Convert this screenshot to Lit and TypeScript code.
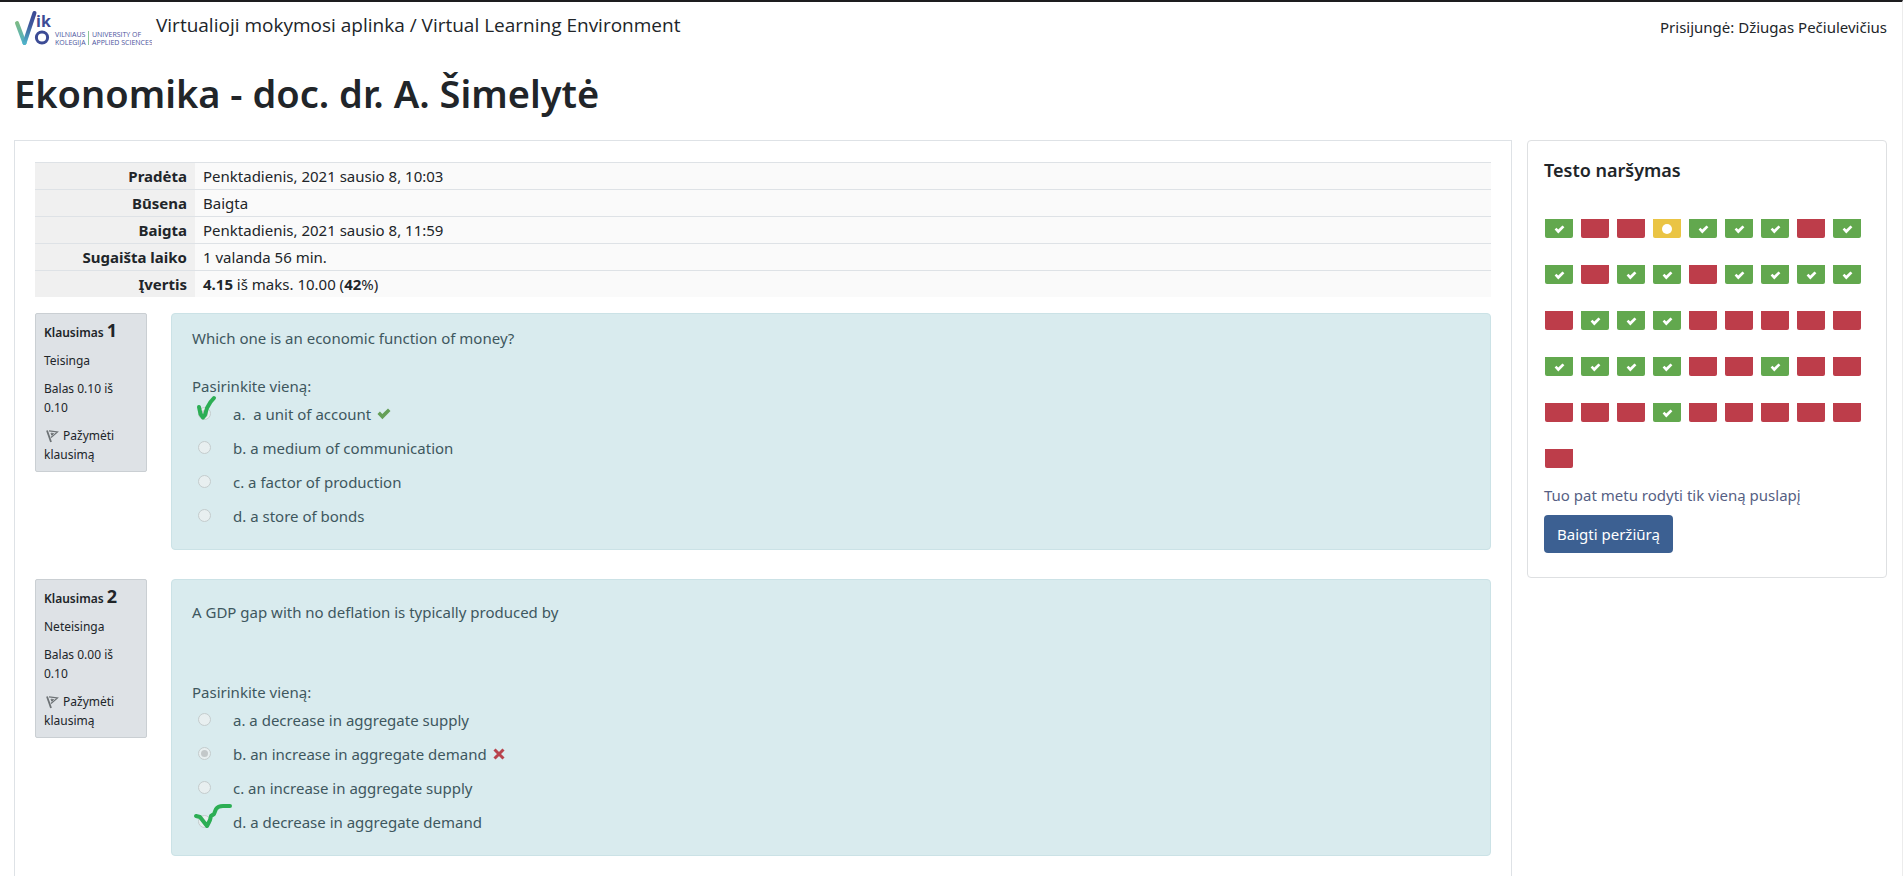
import { LitElement, html, css, svg, nothing } from "lit";
import { customElement, property } from "lit/decorators.js";

type Mark = "right" | "wrong";
type Stroke = "short" | "long";

interface Option {
  text: string;
  checked?: boolean;
  mark?: Mark;
  pen?: Stroke;
}

interface Question {
  number: number;
  state: string;
  grade: string;
  text: string;
  spacious?: boolean;
  options: Option[];
}

const QUESTIONS: Question[] = [
  {
    number: 1,
    state: "Teisinga",
    grade: "Balas 0.10 iš 0.10",
    text: "Which one is an economic function of money?",
    options: [
      { text: "a.\u00a0 a unit of account", checked: true, mark: "right", pen: "short" },
      { text: "b. a medium of communication" },
      { text: "c. a factor of production" },
      { text: "d. a store of bonds" },
    ],
  },
  {
    number: 2,
    state: "Neteisinga",
    grade: "Balas 0.00 iš 0.10",
    text: "A GDP gap with no deflation is typically produced by",
    spacious: true,
    options: [
      { text: "a. a decrease in aggregate supply" },
      { text: "b. an increase in aggregate demand", checked: true, mark: "wrong" },
      { text: "c. an increase in aggregate supply" },
      { text: "d. a decrease in aggregate demand", pen: "long" },
    ],
  },
];

/* c = correct, w = wrong, p = partially correct */
const RESULTS = "cwwpcccwc" + "cwccwcccc" + "wcccwwwww" + "ccccwwcww" + "wwwcwwwww" + "w";
const RESULT_NAMES: Record<string, string> = {
  c: "Teisinga",
  w: "Neteisinga",
  p: "Iš dalies teisinga",
};

const tick = svg`<path d="M0.500 6 L2.900 3.600 L5.300 5.900 L11 0.500 L13.500 2.900 L5.400 11.200 Z" />`;

@customElement("vle-logo")
export class VleLogo extends LitElement {
  static styles = css`
    :host {
      display: block;
    }
    svg {
      display: block;
    }
    .letters {
      font: 700 16px "Open Sans", "Noto Sans", sans-serif;
      fill: #3c4b95;
    }
    .name {
      font: 400 7px "Open Sans", "Noto Sans", sans-serif;
      fill: #4a549c;
    }
  `;

  render() {
    return html`
      <svg width="138" height="38" viewBox="0 0 138 38" role="img" aria-label="Vilniaus kolegija">
        <defs>
          <linearGradient id="left" x1="0" y1="0" x2="0" y2="1">
            <stop offset="0" stop-color="#7cba86" />
            <stop offset="1" stop-color="#4fb2c8" />
          </linearGradient>
          <linearGradient id="right" x1="0" y1="1" x2="0" y2="0">
            <stop offset="0" stop-color="#4fb2c8" />
            <stop offset="0.6" stop-color="#3f579c" />
            <stop offset="1" stop-color="#3c4b95" />
          </linearGradient>
        </defs>
        <path d="M3 14 L10.5 34" stroke="url(#left)" stroke-width="4" stroke-linecap="round" />
        <path d="M10.5 34 L20.5 4" stroke="url(#right)" stroke-width="4" stroke-linecap="round" />
        <text class="letters" x="22" y="18">ik</text>
        <circle cx="28" cy="28.5" r="5.6" fill="none" stroke="#3c4b95" stroke-width="3" />
        <text class="name" x="41" y="28">VILNIAUS</text>
        <text class="name" x="41" y="36">KOLEGIJA</text>
        <path d="M74.5 22 V36" stroke="#8cc59a" />
        <text class="name" x="78" y="28">UNIVERSITY OF</text>
        <text class="name" x="78" y="36">APPLIED SCIENCES</text>
      </svg>
    `;
  }
}

@customElement("attempt-summary")
export class AttemptSummary extends LitElement {
  static styles = css`
    :host {
      display: block;
    }
    table {
      width: 100%;
      border-collapse: collapse;
    }
    th,
    td {
      height: 26px;
      padding: 0 8px;
      border-top: 1px solid #dee2e6;
      line-height: 22px;
    }
    th {
      width: 144px;
      background: #f0f0f0;
      font-weight: 700;
      text-align: right;
    }
    td {
      background: #fafafa;
    }
  `;

  render() {
    return html`
      <table>
        <tbody>
          <tr><th scope="row">Pradėta</th><td>Penktadienis, 2021 sausio 8, 10:03</td></tr>
          <tr><th scope="row">Būsena</th><td>Baigta</td></tr>
          <tr><th scope="row">Baigta</th><td>Penktadienis, 2021 sausio 8, 11:59</td></tr>
          <tr><th scope="row">Sugaišta laiko</th><td>1 valanda 56 min.</td></tr>
          <tr><th scope="row">Įvertis</th><td><b>4.15</b> iš maks. 10.00 (<b>42</b>%)</td></tr>
        </tbody>
      </table>
    `;
  }
}

@customElement("quiz-question")
export class QuizQuestion extends LitElement {
  @property({ attribute: false }) question!: Question;

  static styles = css`
    :host {
      display: grid;
      grid-template-columns: 112px minmax(0, 1fr);
      gap: 24px;
      align-items: start;
    }
    .info {
      display: flex;
      flex-direction: column;
      gap: 9px;
      box-sizing: border-box;
      padding: 10px 8px 7px;
      border: 1px solid #cacfd3;
      border-radius: 2px;
      background: #dee2e6;
      font-size: 12px;
      line-height: 19px;
    }
    .info h3,
    .info p {
      margin: 0;
    }
    .info h3 {
      font-size: 12px;
      font-weight: 600;
      line-height: 18px;
    }
    .number {
      font-size: 18px;
      font-weight: 700;
      line-height: 12px;
    }
    .grade {
      max-width: 80px;
    }
    .flag {
      color: inherit;
      text-decoration: none;
    }
    .flag svg {
      margin: 0 3px 0 2px;
      vertical-align: -3px;
    }
    .content {
      padding: 13px 20px 16px;
      border: 1px solid #cbe2e6;
      border-radius: 4px;
      background: #d9ebee;
      color: #3e575e;
    }
    .text {
      margin: 0 0 26px;
      line-height: 22px;
    }
    .spacious .text {
      margin: 8px 0 58px;
    }
    fieldset {
      min-width: 0;
      margin: 0;
      padding: 0;
      border: 0;
    }
    legend {
      padding: 0;
      line-height: 22px;
    }
    .option {
      display: flex;
      align-items: center;
      height: 34px;
      line-height: 22px;
    }
    .choice {
      position: relative;
      display: flex;
      width: 41px;
    }
    input {
      appearance: none;
      display: grid;
      place-items: center;
      box-sizing: border-box;
      width: 13px;
      height: 13px;
      margin: 0 0 2px 6px;
      border: 1px solid #c4cccd;
      border-radius: 50%;
      background: #e8eff0;
    }
    input:checked::before {
      content: "";
      width: 7px;
      height: 7px;
      border-radius: 50%;
      background: #c3c8c9;
    }
    .pen {
      position: absolute;
      left: 0;
      bottom: 0;
      fill: none;
      stroke: #2cae54;
      stroke-width: 4;
      stroke-linecap: round;
      stroke-linejoin: round;
      pointer-events: none;
    }
    .right,
    .wrong {
      margin-left: 6px;
    }
    .right {
      fill: #659f57;
    }
    .wrong {
      fill: none;
      stroke: #b8434c;
      stroke-width: 3;
    }
  `;

  private pen(kind?: Stroke) {
    if (!kind) return nothing;
    return kind === "short"
      ? html`<svg class="pen" width="40" height="28" viewBox="0 0 40 28" aria-hidden="true">
          <path d="M7 13 L8.500 20 L11 23.500 L13 21 L15 14 L18.500 8 L22 4" />
        </svg>`
      : html`<svg class="pen" width="42" height="28" viewBox="0 0 42 28" aria-hidden="true">
          <path d="M4 14 L8 15 L15 24 L18 18 L19 14 L22 12 L24 7 Q26 4 31 4 H38" />
        </svg>`;
  }

  private mark(kind?: Mark) {
    if (!kind) return nothing;
    return kind === "right"
      ? html`<svg class="right" width="14" height="12" viewBox="0 0 14 12" role="img" aria-label="Teisinga">${tick}</svg>`
      : html`<svg class="wrong" width="12" height="12" viewBox="0 0 12 12" role="img" aria-label="Neteisinga">
          <path d="M1.500 1.500 L10.500 10.500 M10.500 1.500 L1.500 10.500" />
        </svg>`;
  }

  render() {
    const q = this.question;
    return html`
      <div class="info">
        <h3>Klausimas <span class="number">${q.number}</span></h3>
        <p>${q.state}</p>
        <p class="grade">${q.grade}</p>
        <p>
          <a class="flag" href="#flag-${q.number}"><svg width="14" height="14" viewBox="0 0 14 14" fill="none" stroke="#6d7275" aria-hidden="true">
              <path stroke-width="1.800" d="M1 1.500 L5 13" />
              <path stroke-width="1.200" d="M3 1.800 L11.500 3 L5 8.500" />
              <path d="M5 4.200 L7.500 4.500 L5.800 6.200 Z" />
            </svg>Pažymėti klausimą</a>
        </p>
      </div>
      <div class="content ${q.spacious ? "spacious" : ""}">
        <p class="text">${q.text}</p>
        <fieldset>
          <legend>Pasirinkite vieną:</legend>
          <div class="options">
            ${q.options.map(
              (o, i) => html`
                <div class="option">
                  <span class="choice">
                    <input type="radio" id="o${i}" name="q${q.number}" ?checked=${o.checked} disabled />
                    ${this.pen(o.pen)}
                  </span>
                  <label for="o${i}">${o.text}</label>
                  ${this.mark(o.mark)}
                </div>
              `
            )}
          </div>
        </fieldset>
      </div>
    `;
  }
}

@customElement("quiz-navigation")
export class QuizNavigation extends LitElement {
  static styles = css`
    :host {
      display: block;
      padding: 15px 16px 24px;
      border: 1px solid #dee0e2;
      border-radius: 4px;
    }
    h2 {
      margin: 0 0 35px;
      font-size: 18px;
      font-weight: 600;
      line-height: 28px;
    }
    .cells {
      display: flex;
      flex-wrap: wrap;
      gap: 27px 8px;
      margin-bottom: 15px;
      padding-left: 1px;
    }
    .cell {
      display: grid;
      place-items: center;
      width: 28px;
      height: 19px;
      border-radius: 0 0 2px 2px;
      background: #bd3d4a;
    }
    .c {
      background: #62a84e;
    }
    .p {
      background: #eac444;
    }
    .cell svg {
      margin-top: 1px;
      fill: #fff;
    }
    .all {
      display: block;
      margin-bottom: 8px;
      color: #565f84;
      line-height: 24px;
      text-decoration: none;
    }
    button {
      height: 38px;
      padding: 0 13px;
      border: 0;
      border-radius: 4px;
      background: #3c6092;
      color: #fff;
      font: inherit;
    }
    .end {
      display: flex;
    }
  `;

  private glyph(kind: string) {
    if (kind === "c") return html`<svg width="11" height="9" viewBox="0 0 14 12" aria-hidden="true">${tick}</svg>`;
    if (kind === "p")
      return html`<svg width="10" height="10" viewBox="0 0 10 10" aria-hidden="true"><circle cx="5" cy="5" r="5" /></svg>`;
    return nothing;
  }

  render() {
    return html`
      <h2>Testo naršymas</h2>
      <nav class="cells" aria-label="Testo naršymas">
        ${[...RESULTS].map(
          (kind, i) => html`<a class="cell ${kind}" href="#q${i + 1}" aria-label="${i + 1}: ${RESULT_NAMES[kind]}">${this.glyph(kind)}</a>`
        )}
      </nav>
      <a class="all" href="#single">Tuo pat metu rodyti tik vieną puslapį</a>
      <div class="end"><button type="button">Baigti peržiūrą</button></div>
    `;
  }
}

@customElement("app-root")
export class AppRoot extends LitElement {
  static styles = css`
    :host {
      display: flex;
      flex-direction: column;
      box-sizing: border-box;
      min-height: 100vh;
      padding: 0 15px 0 14px;
      border-top: 2px solid #1d1d1f;
      border-right: 1px solid #ececec;
      background: #fff;
      color: #212529;
      font: 15px/22px "Noto Sans", "Open Sans", sans-serif;
    }
    header {
      display: flex;
      align-items: center;
      height: 52px;
    }
    .site {
      margin: 0 auto 6px 4px;
      font-family: "Open Sans", "Noto Sans", sans-serif;
      font-size: 19px;
      line-height: 26px;
    }
    .user {
      margin-bottom: 2px;
    }
    h1 {
      margin: 16px 0 23px;
      font-size: 38px;
      font-weight: 600;
      line-height: 47px;
    }
    .columns {
      display: grid;
      grid-template-columns: minmax(0, 1fr) 360px;
      gap: 15px;
      align-items: start;
      flex: 1;
    }
    main {
      display: flex;
      flex-direction: column;
      align-self: stretch;
      box-sizing: border-box;
      padding: 21px 20px 16px;
      border: 1px solid #dee2e6;
      border-bottom: 0;
    }
    attempt-summary {
      margin-bottom: 16px;
    }
    quiz-question + quiz-question {
      margin-top: 29px;
    }
    quiz-navigation {
      box-sizing: border-box;
    }
  `;

  render() {
    return html`
      <header>
        <vle-logo></vle-logo>
        <span class="site">Virtualioji mokymosi aplinka / Virtual Learning Environment</span>
        <span class="user">Prisijungė: Džiugas Pečiulevičius</span>
      </header>
      <h1>Ekonomika - doc. dr. A. Šimelytė</h1>
      <div class="columns">
        <main>
          <attempt-summary></attempt-summary>
          ${QUESTIONS.map((q) => html`<quiz-question .question=${q}></quiz-question>`)}
        </main>
        <quiz-navigation></quiz-navigation>
      </div>
    `;
  }
}
